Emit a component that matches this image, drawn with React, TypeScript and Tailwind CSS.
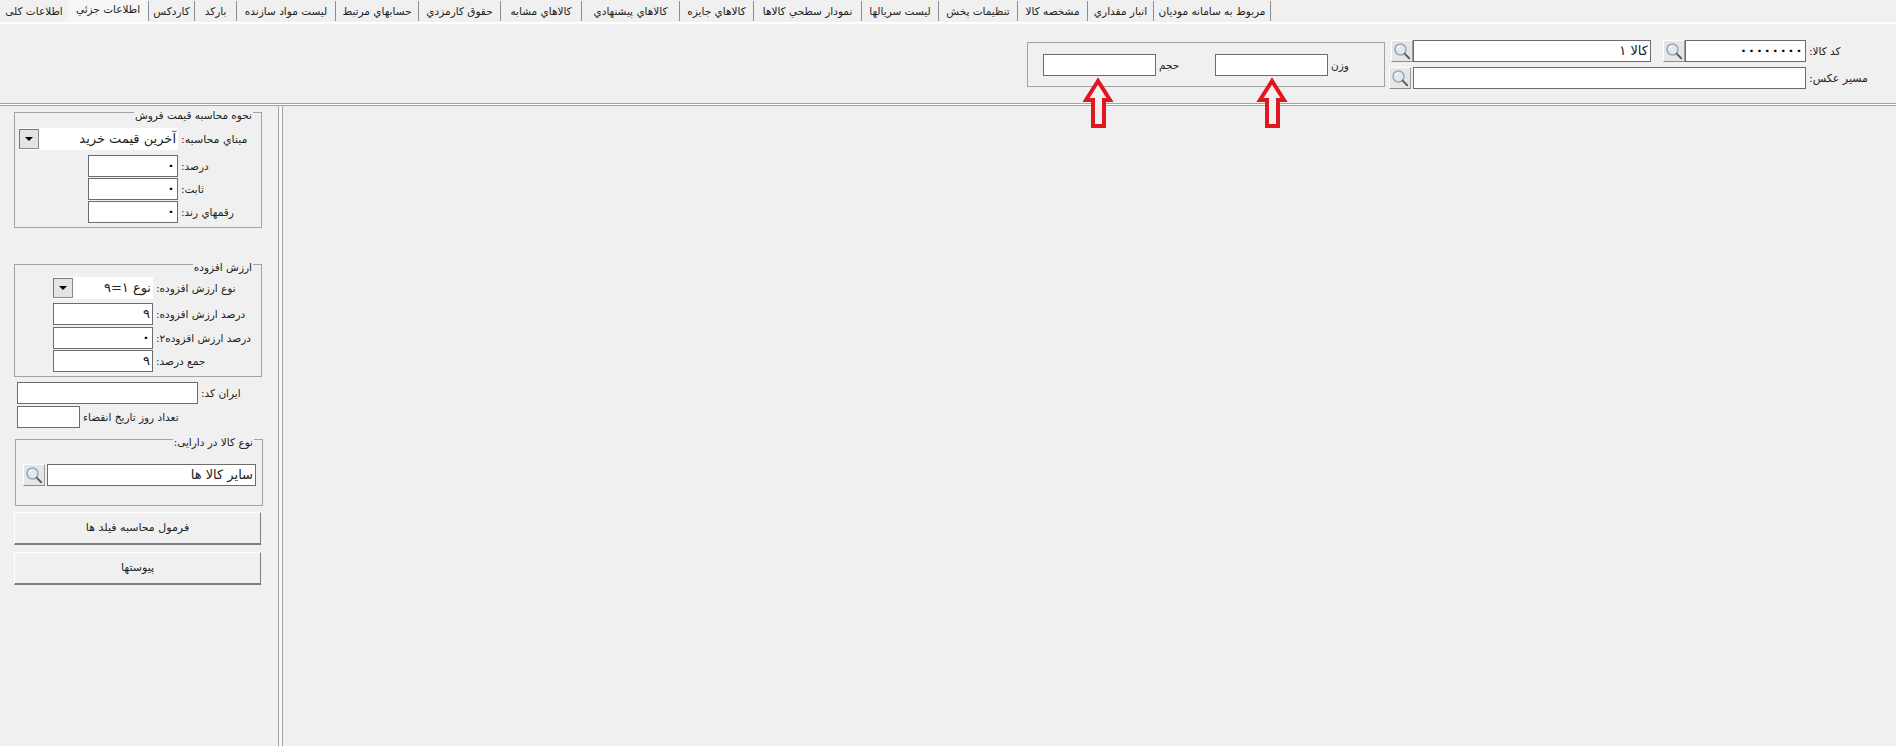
import React from 'react';

const tabs = [
  { label: 'اطلاعات کلی', w: 'w-[68px]' },
  { label: 'اطلاعات جزئي', w: 'w-[80px]', active: true },
  { label: 'کاردکس', w: 'w-[46px]' },
  { label: 'بارکد', w: 'w-[42px]' },
  { label: 'لیست مواد سازنده', w: 'w-[99px]' },
  { label: 'حسابهاي مرتبط', w: 'w-[83px]' },
  { label: 'حقوق کارمزدي', w: 'w-[82px]' },
  { label: 'کالاهاي مشابه', w: 'w-[81px]' },
  { label: 'کالاهاي پیشنهادي', w: 'w-[98px]' },
  { label: 'کالاهاي جایزه', w: 'w-[74px]' },
  { label: 'نمودار سطحي کالاها', w: 'w-[108px]' },
  { label: 'لیست سریالها', w: 'w-[77px]' },
  { label: 'تنظیمات پخش', w: 'w-[79px]' },
  { label: 'مشخصه کالا', w: 'w-[70px]' },
  { label: 'انبار مقداري', w: 'w-[66px]' },
  { label: 'مربوط به سامانه مودیان', w: 'w-[117px]' },
];

function SearchButton({ className = '' }: { className?: string }) {
  return (
    <button className={`w-[22px] h-[22px] shrink-0 flex items-center justify-center bg-[#e6e6e6] border border-t-white border-l-white border-r-[#9a9a9a] border-b-[#8a8a8a] ${className}`}>
      <svg width="18" height="18" viewBox="0 0 18 18">
        <circle cx="7.5" cy="7.5" r="5.5" fill="#dce9f6" stroke="#97a3b0" strokeWidth="1.4" />
        <path d="M4.5 6.5a3.5 3.5 0 0 1 3-2.5" fill="none" stroke="#ffffff" strokeWidth="1.2" />
        <path d="M11.6 11.6l4.6 4.6" stroke="#5c5f63" strokeWidth="2" strokeLinecap="round" />
      </svg>
    </button>
  );
}

function Field({ className = '', value = '', large = false }: { className?: string; value?: string; large?: boolean }) {
  return (
    <div
      dir="rtl"
      className={`h-[22px] shrink-0 bg-white border border-[#6c6c6c] px-[2px] flex items-center whitespace-nowrap overflow-hidden ${large ? 'text-[13px]' : 'text-[11px]'} ${className}`}
    >
      {value}
    </div>
  );
}

function Combo({ className = '', value }: { className?: string; value: string }) {
  return (
    <div className={`h-[22px] shrink-0 bg-white flex items-center ${className}`}>
      <button className="w-[20px] h-[20px] shrink-0 flex items-center justify-center bg-[#e4e4e4] border border-t-[#777] border-l-[#777] border-r-[#888] border-b-[#888]">
        <span className="w-0 h-0 border-x-[4px] border-x-transparent border-t-[4px] border-t-black" />
      </button>
      <div dir="rtl" className="flex-1 px-[2px] text-[13px] whitespace-nowrap">{value}</div>
    </div>
  );
}

function Label({ children, className = 'text-[10.5px]' }: { children: React.ReactNode; className?: string }) {
  return <span dir="rtl" className={`ml-[3px] mt-[2px] whitespace-nowrap ${className}`}>{children}</span>;
}

function Group({ title, className = '', children }: { title: string; className?: string; children: React.ReactNode }) {
  return (
    <div className={`relative border border-[#a3a3a3] ${className}`}>
      <span dir="rtl" className="absolute -top-[5px] right-[8px] px-[1px] bg-[#f0f0f0] text-[10.5px] leading-[14px] whitespace-nowrap">{title}</span>
      {children}
    </div>
  );
}

function FlatButton({ children, className = '' }: { children: React.ReactNode; className?: string }) {
  return (
    <button dir="rtl" className={`ml-[14px] w-[247px] h-[33px] shrink-0 bg-[#f0f0f0] border border-t-white border-l-white border-r-[#7d7d7d] border-b-2 border-b-[#7d7d7d] text-[11px] ${className}`}>
      {children}
    </button>
  );
}

function Arrow({ className }: { className: string }) {
  return (
    <svg className={`absolute ${className}`} width="36" height="54" viewBox="0 0 36 54">
      <path d="M17 5L5 24H12V50H23V24H29Z" fill="#f0f0f0" stroke="#e2161f" strokeWidth="4" />
    </svg>
  );
}

export default function App() {
  return (
    <div className="relative w-[1896px] h-[746px] overflow-hidden flex flex-col bg-[#f0f0f0] text-[#222] [font-family:'DejaVu_Sans',sans-serif]">
      {/* Tabs */}
      <div className="h-[24px] shrink-0 flex items-start border-b-2 border-b-white">
        {tabs.map((tab) => (
          <div
            key={tab.label}
            dir="rtl"
            className={`${tab.w} shrink-0 flex items-center justify-center whitespace-nowrap text-[10.5px] border-l border-l-[#8c8c8c] first:border-l-0 ${tab.active ? 'h-[22px] pb-[3px] bg-[#f6f6f6] border-l-0' : 'h-[20px] mt-[1px] pt-[2px]'}`}
          >
            {tab.label}
          </div>
        ))}
        <div className="w-px h-[20px] mt-[1px] bg-[#8c8c8c]" />
      </div>

      {/* Header form */}
      <div className="h-[79px] shrink-0 flex items-start pt-[15px] pl-[1027px]">
        <div className="mt-[3px] w-[358px] h-[45px] shrink-0 border border-[#a3a3a3] flex items-center pl-[15px]">
          <Field className="w-[113px]" />
          <Label className="w-[56px] text-left text-[10.5px]">حجم</Label>
          <Field className="w-[113px]" />
          <Label>وزن</Label>
        </div>
        <div className="ml-[4px] flex flex-col gap-[5px]">
          <div className="flex items-center">
            <SearchButton className="ml-[2px] mt-[1px]" />
            <Field className="w-[238px]" value="کالا ۱" large />
            <SearchButton className="ml-[12px] mt-[1px]" />
            <Field className="w-[121px] font-bold tracking-[1px] text-black" value="۰۰۰۰۰۰۰۰" large />
            <Label>کد کالا:</Label>
          </div>
          <div className="flex items-center">
            <SearchButton className="mr-[2px]" />
            <Field className="w-[393px]" />
            <Label className="text-[11px]">مسیر عکس:</Label>
          </div>
        </div>
      </div>

      <div className="h-[3px] shrink-0 border-y border-y-[#a3a3a3] bg-white" />

      <div className="flex-1 flex">
        {/* Left panel */}
        <div className="w-[278px] shrink-0 flex flex-col pt-[6px]">
          <Group title="نحوه محاسبه قيمت فروش" className="ml-[14px] w-[248px] h-[116px] pt-[15px] pl-[4px]">
            <div className="flex items-center mb-[5px]">
              <Combo className="w-[159px]" value="آخرین قیمت خرید" />
              <Label className="text-[11px]">مبناي محاسبه:</Label>
            </div>
            <div className="flex flex-col gap-[1px] pl-[69px]">
              <div className="flex items-center"><Field className="w-[90px] font-bold text-black" value="۰" large /><Label>درصد:</Label></div>
              <div className="flex items-center"><Field className="w-[90px] font-bold text-black" value="۰" large /><Label>ثابت:</Label></div>
              <div className="flex items-center"><Field className="w-[90px] font-bold text-black" value="۰" large /><Label>رقمهاي رند:</Label></div>
            </div>
          </Group>

          <Group title="ارزش افزوده" className="mt-[36px] ml-[14px] w-[248px] h-[113px] pt-[12px] pl-[38px]">
            <div className="flex items-center mb-[4px]">
              <Combo className="w-[100px]" value="نوع ۱=۹" />
              <Label>نوع ارزش افزوده:</Label>
            </div>
            <div className="flex flex-col gap-[1px]">
              <div className="flex items-center mb-[1px]"><Field className="w-[100px]" value="۹" large /><Label>درصد ارزش افزوده:</Label></div>
              <div className="flex items-center"><Field className="w-[100px] font-bold text-black" value="۰" large /><Label>درصد ارزش افزوده۲:</Label></div>
              <div className="flex items-center"><Field className="w-[100px]" value="۹" large /><Label>جمع درصد:</Label></div>
            </div>
          </Group>

          <div className="mt-[5px] ml-[17px] flex items-center">
            <Field className="w-[181px]" />
            <Label>ایران کد:</Label>
          </div>
          <div className="mt-[2px] ml-[17px] flex items-center">
            <Field className="w-[63px]" />
            <Label>تعداد روز تاریخ انقضاء</Label>
          </div>

          <Group title="نوع کالا در دارایی:" className="mt-[11px] ml-[15px] w-[248px] h-[67px] pt-[24px] pl-[7px]">
            <div className="flex items-center">
              <SearchButton className="mr-[2px]" />
              <Field className="w-[209px]" value="سایر کالا ها" large />
            </div>
          </Group>

          <FlatButton className="mt-[6px]">فرمول محاسبه فیلد ها</FlatButton>
          <FlatButton className="mt-[7px]">پیوستها</FlatButton>
        </div>

        {/* Main area */}
        <div className="w-[5px] shrink-0 border-x border-x-[#a3a3a3] bg-white/60" />
        <div className="flex-1" />
      </div>

      <Arrow className="left-[1081px] top-[76px]" />
      <Arrow className="left-[1255px] top-[76px]" />
    </div>
  );
}
